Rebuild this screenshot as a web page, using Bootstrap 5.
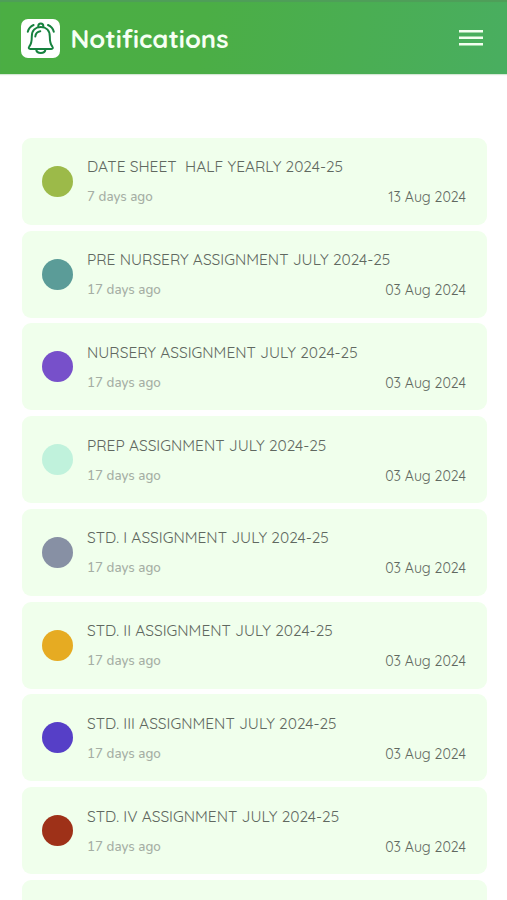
<!DOCTYPE html>
<html lang="en">
<head>
<meta charset="utf-8">
<meta name="viewport" content="width=device-width, initial-scale=1">
<title>Notifications</title>
<link href="https://cdn.jsdelivr.net/npm/bootstrap@5.3.0/dist/css/bootstrap.min.css" rel="stylesheet">
<style>
body{font-family:Quicksand,Lato,sans-serif;background:#fff;height:900px;overflow:hidden}
.topbar{height:74px;padding:2px 24px 0 21px;background:linear-gradient(100deg,#4bae43 0%,#4bae45 40%,#49ae60 100%);box-shadow:inset 0 2px 1px #4f9e59,0 1px 1px #d5e8d5}
.bell-box{width:39px;height:39px;border-radius:7px;background:#fff}
.page-name{font-size:25.6px;font-weight:700;line-height:32px;margin-left:10.5px;color:#f6fff3}
.notices{height:826px;overflow:hidden;padding:63.8px 20.5px 0 22px;gap:5.75px}
.notice{height:87px;flex:none;border-radius:9px;background:#f0ffec;padding:0 20.5px 0 20px}
.dot{width:31px;height:31px;flex:none;margin-right:14px}
.notice-body{padding-top:1.4px}
.subject{font-size:15.5px;line-height:20px;color:#606860;white-space:pre;margin-bottom:10px}
.ago{font-family:Nunito,Lato,sans-serif;font-size:13.4px;font-weight:500;line-height:21px;color:#a5aea4}
.date{font-size:14.2px;line-height:20px;padding-top:1px;color:#606860}
</style>
<script src="https://cdn.jsdelivr.net/npm/bootstrap@5.3.0/dist/js/bootstrap.bundle.min.js"></script>
</head>
<body>
<header class="topbar d-flex align-items-center">
  <span class="bell-box d-flex align-items-center justify-content-center">
    <svg width="39" height="39" viewBox="0 0 39 39" fill="none" stroke="#17823f" stroke-width="2" stroke-linecap="round" stroke-linejoin="round">
      <path d="M8.300 27.500c2-2.200 2.500-4 2.500-10C10.800 11.500 14.500 8 19.800 8s9 3.500 9 9.500c0 6 .5 7.800 2.500 10 1 1.300.6 2.500-1 2.500h-21c-1.600 0-2-1.200-1-2.500Z"/>
      <path d="M17.300 8V7a2.500 2.500 0 0 1 5 0v1M15.200 30.500c.6 4.600 8.600 4.600 9.200 0M14.300 17.500c.3-3 2-4.900 5-5.300M12.600 6C9.600 7.200 7.600 9.600 6.800 12.800M27 6c3 1.200 5 3.600 5.800 6.800"/>
    </svg>
  </span>
  <h1 class="page-name mb-0">Notifications</h1>
  <svg class="ms-auto" width="24" height="18" viewBox="0 0 24 18" fill="#f3fff0" role="img" aria-label="Menu"><path d="M0 1h24v2.500H0zM0 7.500h24V10H0zM0 14h24v2.500H0z"/></svg>
</header>
<main class="notices d-flex flex-column">
  <article class="notice d-flex align-items-center"><span class="dot rounded-circle" style="background:#9cba49"></span><div class="notice-body flex-grow-1"><div class="subject">DATE SHEET  HALF YEARLY 2024-25</div><div class="d-flex justify-content-between"><span class="ago">7 days ago</span><span class="date">13 Aug 2024</span></div></div></article>
  <article class="notice d-flex align-items-center"><span class="dot rounded-circle" style="background:#5b9c98"></span><div class="notice-body flex-grow-1"><div class="subject">PRE NURSERY ASSIGNMENT JULY 2024-25</div><div class="d-flex justify-content-between"><span class="ago">17 days ago</span><span class="date">03 Aug 2024</span></div></div></article>
  <article class="notice d-flex align-items-center"><span class="dot rounded-circle" style="background:#7750ca"></span><div class="notice-body flex-grow-1"><div class="subject">NURSERY ASSIGNMENT JULY 2024-25</div><div class="d-flex justify-content-between"><span class="ago">17 days ago</span><span class="date">03 Aug 2024</span></div></div></article>
  <article class="notice d-flex align-items-center"><span class="dot rounded-circle" style="background:#c0f2dc"></span><div class="notice-body flex-grow-1"><div class="subject">PREP ASSIGNMENT JULY 2024-25</div><div class="d-flex justify-content-between"><span class="ago">17 days ago</span><span class="date">03 Aug 2024</span></div></div></article>
  <article class="notice d-flex align-items-center"><span class="dot rounded-circle" style="background:#8790a4"></span><div class="notice-body flex-grow-1"><div class="subject">STD. I ASSIGNMENT JULY 2024-25</div><div class="d-flex justify-content-between"><span class="ago">17 days ago</span><span class="date">03 Aug 2024</span></div></div></article>
  <article class="notice d-flex align-items-center"><span class="dot rounded-circle" style="background:#e6ab22"></span><div class="notice-body flex-grow-1"><div class="subject">STD. II ASSIGNMENT JULY 2024-25</div><div class="d-flex justify-content-between"><span class="ago">17 days ago</span><span class="date">03 Aug 2024</span></div></div></article>
  <article class="notice d-flex align-items-center"><span class="dot rounded-circle" style="background:#563fc7"></span><div class="notice-body flex-grow-1"><div class="subject">STD. III ASSIGNMENT JULY 2024-25</div><div class="d-flex justify-content-between"><span class="ago">17 days ago</span><span class="date">03 Aug 2024</span></div></div></article>
  <article class="notice d-flex align-items-center"><span class="dot rounded-circle" style="background:#9e3118"></span><div class="notice-body flex-grow-1"><div class="subject">STD. IV ASSIGNMENT JULY 2024-25</div><div class="d-flex justify-content-between"><span class="ago">17 days ago</span><span class="date">03 Aug 2024</span></div></div></article>
  <article class="notice" aria-hidden="true"></article>
</main>
</body>
</html>
